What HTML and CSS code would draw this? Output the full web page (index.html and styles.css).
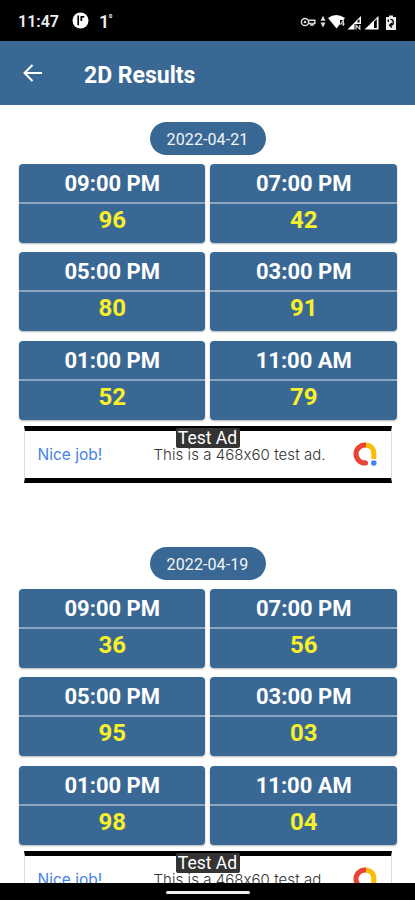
FILE: index.html
```html
<!DOCTYPE html>
<html lang="en">
	<head>
		<meta charset="UTF-8" />
		<meta name="viewport" content="width=device-width, initial-scale=1.0" />
		<title>2D Results</title>
		<link rel="stylesheet" href="styles.css">
	</head>
	<body>
		<div class="screen">
			<div class="status">
				<span class="clock">11:47</span>
				<svg class="app_icon" width="17" height="17" viewBox="0 0 17 17">
					<circle cx="8.5" cy="8.5" r="8" fill="#fff" />
					<path d="M6.2 3.5V13.2M9.3 9V4.8H12.2" fill="none" stroke="#000" stroke-width="1.7" />
				</svg>
				<span class="temp">1<i>°</i></span>
				<svg class="signals" width="98" height="18" viewBox="0 0 98 18">
					<g fill="none" stroke="#ddd" stroke-width="1.5">
						<circle cx="5" cy="9" r="3.6" />
						<circle cx="5" cy="9" r="0.6" />
						<path d="M8.2 7.2H14.8V10.6H13V12H11V10.6H8.2" />
					</g>
					<g transform="translate(5 0)">
						<path d="M15.5 7.8L18 2.8L20.5 7.8ZM15.5 9.4L18 14.4L20.5 9.4Z" fill="#ddd" />
						<path d="M23 5Q31 -1 40 5L31.5 15.5Z" fill="#fff" />
						<path d="M35 7H41V15H35Z" fill="#000" />
						<path d="M38.4 13V7.4L35.8 11H39.8" fill="none" stroke="#ccc" stroke-width="1.2" />
						<path d="M42.5 16.6L56 3V16.6Z" fill="#fff" />
						<path d="M52.5 8L54.5 6V9.5H52.5ZM49.5 11H56.5V17H49.5Z" fill="#000" />
						<path d="M51 16.4V12.4L54.8 16V12" fill="none" stroke="#ddd" stroke-width="1.2" />
						<path d="M59.5 16.6L73.5 3V16.6Z" fill="#fff" />
						<path d="M69 8.7L71.8 6V15H69Z" fill="#000" />
						<path d="M81 4H84V2.5H88V4H91V17H81Z" fill="#eee" />
						<path d="M85.4 6.4C89.2 6.4 89.2 12 85.8 12.2M87 10L84.5 12.2L87 14.4M83.3 6.4V9" fill="none" stroke="#000" stroke-width="1.3" />
					</g>
				</svg>
			</div>
			<div class="header">
				<svg class="back" width="20" height="18" viewBox="0 0 20 18">
					<path d="M19 9H2M9.5 1L1.5 9L9.5 17" fill="none" stroke="#fff" stroke-width="2" />
				</svg>
				<h1>2D Results</h1>
			</div>
			<div class="content">
				<div class="day">
					<div class="date">2022-04-21</div>
					<div class="results">
						<div class="card"><h2>09:00 PM</h2><p>96</p></div>
						<div class="card"><h2>07:00 PM</h2><p>42</p></div>
						<div class="card"><h2>05:00 PM</h2><p>80</p></div>
						<div class="card"><h2>03:00 PM</h2><p>91</p></div>
						<div class="card"><h2>01:00 PM</h2><p>52</p></div>
						<div class="card"><h2>11:00 AM</h2><p>79</p></div>
					</div>
					<div class="ad">
						<span class="nice">Nice job!</span>
						<span class="ad_text">This is a 468x60 test ad.</span>
						<svg class="admob" width="26" height="26" viewBox="0 0 26 26">
							<path d="M13 4C18.5 4 21.8 7.5 21.8 12.5V18" fill="none" stroke="#fbbc04" stroke-width="5" />
							<path d="M13.5 22H13A9 9 0 0 1 13 4H14" fill="none" stroke="#ea4335" stroke-width="5" />
							<circle cx="13.5" cy="22" r="2.5" fill="#ea4335" />
							<circle cx="21.8" cy="22" r="2.8" fill="#4285f4" />
						</svg>
						<span class="tag">Test Ad</span>
					</div>
				</div>
				<div class="day">
					<div class="date">2022-04-19</div>
					<div class="results">
						<div class="card"><h2>09:00 PM</h2><p>36</p></div>
						<div class="card"><h2>07:00 PM</h2><p>56</p></div>
						<div class="card"><h2>05:00 PM</h2><p>95</p></div>
						<div class="card"><h2>03:00 PM</h2><p>03</p></div>
						<div class="card"><h2>01:00 PM</h2><p>98</p></div>
						<div class="card"><h2>11:00 AM</h2><p>04</p></div>
					</div>
					<div class="ad">
						<span class="nice">Nice job!</span>
						<span class="ad_text">This is a 468x60 test ad.</span>
						<svg class="admob" width="26" height="26" viewBox="0 0 26 26">
							<path d="M13 4C18.5 4 21.8 7.5 21.8 12.5V18" fill="none" stroke="#fbbc04" stroke-width="5" />
							<path d="M13.5 22H13A9 9 0 0 1 13 4H14" fill="none" stroke="#ea4335" stroke-width="5" />
							<circle cx="13.5" cy="22" r="2.5" fill="#ea4335" />
							<circle cx="21.8" cy="22" r="2.8" fill="#4285f4" />
						</svg>
						<span class="tag">Test Ad</span>
					</div>
				</div>
			</div>
			<div class="nav"><div class="handle"></div></div>
		</div>
	</body>
</html>
```
FILE: styles.css
```css
* {
	margin: 0;
	padding: 0;
	box-sizing: border-box;
}
body {
	font-family: Roboto, "Liberation Sans", sans-serif;
	background: #fff;
}

.screen {
	width: 415px;
	height: 900px;
	display: flex;
	flex-direction: column;
	overflow: hidden;
}

.status {
	height: 41px;
	flex: none;
	display: flex;
	align-items: center;
	padding: 0 17px 0 18px;
	background: #000;
	color: #eee;
}
.status .clock {
	width: 54px;
	padding-top: 2px;
	font-size: 16px;
	font-weight: 600;
}
.status .temp {
	margin-left: 10px;
	padding-top: 1px;
	font-size: 18px;
	font-weight: 600;
}
.status .temp i {
	font-size: 12px;
	font-style: normal;
	vertical-align: 4px;
	margin-left: -1px;
}
.status .signals {
	margin-left: auto;
	margin-top: 3px;
	width: 98px;
}

.header {
	height: 64px;
	flex: none;
	display: flex;
	align-items: center;
	padding-left: 23px;
	background: #3a6895;
	color: #fff;
}
.header h1 {
	margin: 5px 0 0 41px;
	font-size: 23px;
	line-height: 28px;
	font-weight: 700;
}

.content {
	flex: 1;
	min-height: 0;
	overflow: hidden;
	padding-top: 17px;
}
.day {
	height: 425px;
	display: flex;
	flex-direction: column;
	align-items: center;
}
.date {
	width: 116px;
	height: 33px;
	flex: none;
	line-height: 35px;
	border-radius: 17px;
	text-align: center;
	font-size: 16px;
	letter-spacing: 0.1px;
	background: #3a6895;
	color: #f2f5f8;
}

.results {
	width: 378px;
	margin-top: 9px;
	display: grid;
	grid-template-columns: 1fr 1fr;
	gap: 9.4px 5px;
}
.card {
	height: 79px;
	border-radius: 4px;
	text-align: center;
	background: #3a6895;
	box-shadow: 0 1px 2px rgba(0, 0, 0, 0.3);
}
.card h2 {
	height: 40px;
	line-height: 40px;
	padding-left: 1px;
	font-size: 22px;
	font-weight: 700;
	color: #fff;
	border-bottom: 2px solid #8ba6c0;
}
.card p {
	line-height: 33px;
	padding-left: 1px;
	font-size: 24px;
	font-weight: 700;
	color: #f7f02a;
}

.ad {
	position: relative;
	width: 368px;
	height: 57px;
	flex: none;
	margin-top: 6px;
	padding-left: 13px;
	display: flex;
	align-items: center;
	background: #fff;
	border: 1px solid #ddd;
	border-top: 5px solid #000;
	border-bottom: 5px solid #000;
	font-family: Inter, "Open Sans", sans-serif;
	font-feature-settings: "calt" 0;
}
.ad .nice {
	width: 116px;
	font-size: 15.5px;
	color: #4482e8;
}
.ad .ad_text {
	width: 198px;
	font-size: 15px;
	letter-spacing: 0.05px;
	color: #333;
	font-weight: 300;
	white-space: nowrap;
}
.ad .tag {
	position: absolute;
	left: 151px;
	top: -3px;
	width: 64px;
	height: 20px;
	line-height: 21px;
	border-radius: 2px;
	text-align: center;
	font-family: Roboto, sans-serif;
	font-size: 17.5px;
	background: #333;
	color: #fff;
}

.nav {
	height: 17px;
	flex: none;
	padding-top: 8px;
	background: #000;
}
.nav .handle {
	width: 84px;
	height: 3px;
	margin: 0 auto;
	border-radius: 2px;
	background: #eee;
}
```
